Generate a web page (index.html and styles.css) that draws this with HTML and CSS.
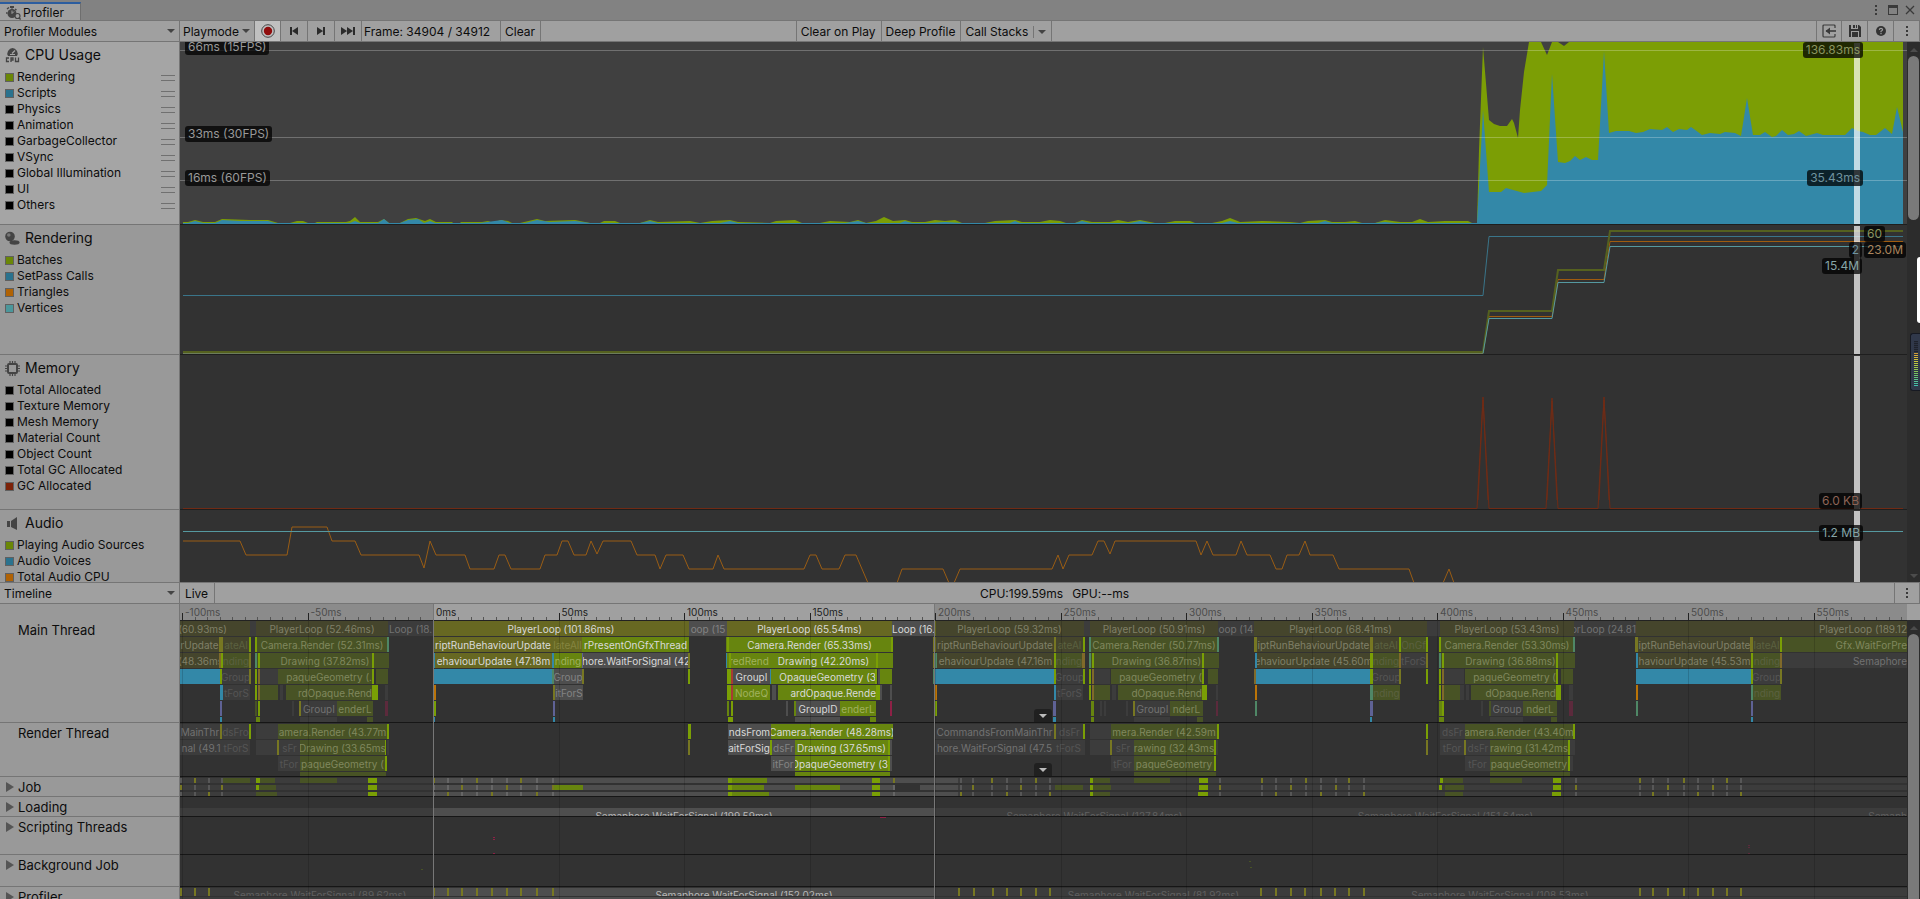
FILE: index.html
```
<!DOCTYPE html>
<html lang="en">
<head>
    <meta charset="UTF-8">
    <meta name="viewport" content="width=device-width, initial-scale=1.0">
    <title>Profiler</title>
    <link rel="stylesheet" href="styles.css">
</head>
<body>

<!-- Window tab bar -->
<header class="tab-bar">
    <div class="tab">
        <svg class="tab-icon" viewBox="0 0 15 14" width="15" height="14">
            <circle cx="6" cy="7.500" r="4.500" fill="#444"/>
            <rect x="4" y="0" width="4" height="2" fill="#444"/>
            <rect x="5.500" y="1" width="1" height="3" fill="#444"/>
            <path d="M1 3l2-1.500M0 7h1.500M9 3l1.500 1" stroke="#444" stroke-width="1.500"/>
            <path d="M6 7.500V4.500M6 7.500l2-2" stroke="#a0a0a0" stroke-width="1"/>
            <circle cx="11.500" cy="10" r="2.500" fill="#a0a0a0" stroke="#444" stroke-width="1.200"/>
            <path d="M13 11.500l1.500 2" stroke="#444" stroke-width="1.300"/>
        </svg>
        <span>Profiler</span>
    </div>
    <div class="window-buttons">
        <button aria-label="Menu"><svg viewBox="0 0 12 12" width="12" height="12"><path d="M5 1h2v2H5zM5 5h2v2H5zM5 9h2v2H5z" fill="#3a3a3a"/></svg></button>
        <button aria-label="Maximize"><svg viewBox="0 0 12 12" width="12" height="12"><rect x="1.500" y="1.500" width="9" height="9" fill="none" stroke="#3a3a3a"/><rect x="1" y="1" width="10" height="3" fill="#3a3a3a"/></svg></button>
        <button aria-label="Close"><svg viewBox="0 0 12 12" width="12" height="12"><path d="M2 2l8 8M10 2l-8 8" stroke="#3a3a3a" stroke-width="1.300"/></svg></button>
    </div>
</header>

<!-- Main toolbar -->
<div class="toolbar">
    <div class="drop drop-side">
        <select aria-label="Profiler Modules"><option>Profiler Modules</option></select>
    </div>
    <div class="drop drop-mode">
        <select aria-label="Playmode"><option>Playmode</option></select>
    </div>
    <button class="icon-button record" aria-label="Record">
        <svg viewBox="0 0 14 14" width="14" height="14"><circle cx="7" cy="7" r="6.300" fill="none" stroke="#444"/><circle cx="7" cy="7" r="4.200" fill="#900c0c"/></svg>
    </button>
    <button class="icon-button" aria-label="Previous frame">
        <svg viewBox="0 0 14 10" width="14" height="10"><path d="M3 1h2v8H3zM11 1v8L5 5z" fill="#2b2b2b"/></svg>
    </button>
    <button class="icon-button" aria-label="Next frame">
        <svg viewBox="0 0 14 10" width="14" height="10"><path d="M9 1h2v8H9zM3 1v8l6-4z" fill="#2b2b2b"/></svg>
    </button>
    <button class="icon-button" aria-label="Current frame">
        <svg viewBox="0 0 14 10" width="14" height="10"><path d="M12 1h2v8h-2zM0 1v8l6-4zM6 1v8l6-4z" fill="#2b2b2b"/></svg>
    </button>
    <span class="frame-label">Frame: 34904 / 34912</span>
    <button class="text-button">Clear</button>
    <div class="space"></div>
    <button class="text-button first">Clear on Play</button>
    <button class="text-button">Deep Profile</button>
    <button class="text-button stacks">Call Stacks <i class="caret"></i></button>
    <div class="space wide"></div>
    <div class="tools">
        <button class="icon-button first" aria-label="Load">
            <svg viewBox="0 0 14 14" width="14" height="14"><path d="M13 4V2q0-1-1-1H2Q1 1 1 2v10q0 1 1 1h10q1 0 1-1v-2" fill="none" stroke="#3a3a3a" stroke-width="1.200"/><path d="M4 7h10" stroke="#3a3a3a" stroke-width="1.600"/><path d="M3.500 7L8 3.500v7z" fill="#3a3a3a"/></svg>
        </button>
        <button class="icon-button" aria-label="Save">
            <svg viewBox="0 0 14 14" width="14" height="14"><path d="M1 1h2v4h7V1h1l2 2v10h-2V7H3v6H1z" fill="#333"/><path d="M5 1h2v3H5zM8 1h1v3H8zM4 8h6v5H4z" fill="#333"/></svg>
        </button>
        <button class="icon-button" aria-label="Help">
            <svg viewBox="0 0 14 14" width="14" height="14"><circle cx="7" cy="7" r="5" fill="#333"/><path d="M5.300 5.800Q5.500 4.300 7 4.300T8.600 5.700Q8.500 6.500 7 7.300V8.300" fill="none" stroke="#a0a0a0" stroke-width="1.200"/><rect x="6.400" y="9" width="1.200" height="1.200" fill="#a0a0a0"/></svg>
        </button>
        <button class="icon-button" aria-label="More">
            <svg viewBox="0 0 12 12" width="12" height="12"><path d="M5 1h2v2H5zM5 5h2v2H5zM5 9h2v2H5z" fill="#3a3a3a"/></svg>
        </button>
    </div>
</div>

<!-- Profiler modules -->
<div class="modules">
    <div class="module-list">
        <section class="module cpu selected">
            <div class="legend">
                <h2>
                    <svg viewBox="0 0 15 15" width="15" height="15"><path d="M3 8Q1.500 6 3 3Q5 0 7.500 0T12 3q1.500 3 0 5z" fill="#444"/><path d="M7 5.500L10 2.500" stroke="#a5a5a5" stroke-width="1.200"/><path d="M5 6.500h5" stroke="#a5a5a5"/><path d="M4 10H1.500v3.500H4M6 14v-4h2v2H6M10.500 9.500v4h3v-4" fill="none" stroke="#444" stroke-width="1.300"/></svg>
                    CPU Usage
                </h2>
                <ul class="draggable">
                    <li class="c-green">Rendering</li>
                    <li class="c-blue">Scripts</li>
                    <li>Physics</li>
                    <li>Animation</li>
                    <li>GarbageCollector</li>
                    <li>VSync</li>
                    <li>Global Illumination</li>
                    <li>UI</li>
                    <li>Others</li>
                </ul>
            </div>
            <div class="chart">
                <svg viewBox="180 42 1727 182" preserveAspectRatio="none">
                    <path fill="#7c9e05" d="M183 224V222H188L195 220L203 222H215L222 219L250 220H268L278 223H290L297 221H303L308 223H315L317 222H346L350 221L355 217L360 222H378L384 219L389 223H400L408 219L416 218L425 221L430 219L436 222H452L453 223H460L461 222H482L488 221L494 223L500 220L508 221L512 223H520L537 219L545 221L575 220L590 223H600L604 221H615L620 223H640L650 220L658 222L690 221L700 223L712 221L730 220L738 222L770 223L776 221L795 220L802 223H820L830 221L850 222L858 220L866 223L876 221L884 217L893 221L905 220L912 222H925L935 220L945 221L955 220L962 223H985L995 221L1015 220L1022 222H1040L1050 220L1060 221L1066 223H1075L1082 220L1092 222H1110L1118 220L1128 222L1140 220L1155 223H1165L1175 221H1190L1195 223H1212L1222 221L1230 218L1240 222L1262 221L1290 222L1300 223L1308 221L1325 220L1332 222H1345L1355 221L1362 223H1375L1385 220L1400 222H1412L1420 219L1428 222L1445 221H1468L1472 223H1477L1479 150L1483 47L1489 120L1494 124L1500 126H1507L1512 119L1514 123L1518 138L1520 110L1524 72L1529 42H1541L1547 55L1552 42H1558L1564 46L1569 42H1903V224Z"/>
                    <path fill="#3388a8" d="M183 224V223H188L195 221L203 223H215L222 220L240 221H268L275 223H350L355 221L360 223H378L384 219L389 223H400L408 220L418 219L424 223L430 221L435 223H480L502 220L510 223H525L537 220L550 222L575 221L590 223H640L650 221L658 223H720L730 221L738 223H845L858 221L866 223H900L905 221L912 223H930L945 222L962 223H1010L1015 221L1020 223H1075L1082 221L1090 223H1130L1140 221L1150 223H1222L1230 221L1238 223H1318L1325 221L1332 223H1375L1385 222L1395 223H1477L1483 110L1489 192H1501L1506 188L1524 193L1541 191L1547 185L1552 74L1558 162L1565 163L1570 161L1575 156L1580 160L1586 157L1592 160H1598L1604 51L1609 133L1616 131H1629L1636 133L1643 132L1650 129L1662 130L1667 127L1673 132L1679 129L1687 130L1691 127L1698 132L1702 135L1710 133L1720 134L1725 132L1735 133L1741 136L1747 98L1753 135H1760L1765 132L1772 137L1776 136L1782 130L1788 135L1794 134L1799 131L1806 136L1817 133L1823 135H1845L1852 128L1858 131L1863 132L1870 135H1876L1885 128L1892 134L1897 107L1903 132V224Z"/>
                    <path class="grid" d="M180 50.500H1907M180 137.500H1907M180 180.500H1907"/>
                </svg>
                <i class="cursor"></i>
                <span class="badge fps-15">66ms (15FPS)</span>
                <span class="badge fps-30">33ms (30FPS)</span>
                <span class="badge fps-60">16ms (60FPS)</span>
                <span class="badge v-cpu">136.83ms</span>
                <span class="badge v-script">35.43ms</span>
            </div>
        </section>

        <section class="module rendering">
            <div class="legend">
                <h2>
                    <svg viewBox="0 0 15 15" width="15" height="15"><circle cx="5" cy="5.500" r="4.800" fill="#444"/><circle cx="3.800" cy="4" r="1.800" fill="#777"/><ellipse cx="9.500" cy="11.500" rx="5" ry="2.200" fill="#444"/></svg>
                    Rendering
                </h2>
                <ul>
                    <li class="c-green">Batches</li>
                    <li class="c-blue">SetPass Calls</li>
                    <li class="c-orange">Triangles</li>
                    <li class="c-teal">Vertices</li>
                </ul>
            </div>
            <div class="chart">
                <svg viewBox="180 225 1727 129" preserveAspectRatio="none">
                    <path stroke="#3a758a" d="M183 295.500H1483L1489 236.500H1903"/>
                    <path stroke="#a05c0f" d="M183 352H1483L1489 316.500H1552L1558 279.500H1604L1610 241.500H1903"/>
                    <path stroke="#55611f" stroke-width="2" d="M183 352H1483L1489 311H1552L1558 270H1604L1610 231H1903"/>
                    <path stroke="#5599a0" d="M1483 353.500L1489 318.500H1552L1558 282.500H1604L1610 246.500H1903"/>
                    <path stroke="#6c7c5c" d="M183 353.500H1483"/>
                </svg>
                <i class="cursor"></i>
                <span class="badge v-batches">60</span>
                <span class="badge v-setpass">2</span>
                <span class="badge v-tris">23.0M</span>
                <span class="badge v-verts">15.4M</span>
            </div>
        </section>

        <section class="module memory">
            <div class="legend">
                <h2>
                    <svg viewBox="0 0 15 15" width="15" height="15"><rect x="3" y="3" width="9" height="9" rx="1" fill="none" stroke="#444" stroke-width="2"/><path d="M5 0v2M7.500 0v2M10 0v2M5 13v2M7.500 13v2M10 13v2M0 5h2M0 7.500h2M0 10h2M13 5h2M13 7.500h2M13 10h2" stroke="#444" stroke-width="1.200"/></svg>
                    Memory
                </h2>
                <ul>
                    <li>Total Allocated</li>
                    <li>Texture Memory</li>
                    <li>Mesh Memory</li>
                    <li>Material Count</li>
                    <li>Object Count</li>
                    <li>Total GC Allocated</li>
                    <li class="c-red">GC Allocated</li>
                </ul>
            </div>
            <div class="chart">
                <svg viewBox="180 355 1727 154" preserveAspectRatio="none">
                    <path stroke="#702b15" d="M183 508.500H1477L1483 397L1489 508.500H1546L1552 398L1558 508.500H1598L1604 397L1610 508.500H1903"/>
                    <path stroke="#702b15" d="M1478 500L1483 400L1488 500M1547 500L1552 401L1557 500M1599 500L1604 400L1609 500"/>
                </svg>
                <i class="cursor"></i>
                <span class="badge v-gc">6.0 KB</span>
            </div>
        </section>

        <section class="module audio">
            <div class="legend">
                <h2>
                    <svg viewBox="0 0 15 15" width="15" height="15"><path d="M2 5h3v6H2zM6 5l6-4v13l-6-3z" fill="#444"/></svg>
                    Audio
                </h2>
                <ul>
                    <li class="c-green">Playing Audio Sources</li>
                    <li class="c-blue">Audio Voices</li>
                    <li class="c-orange">Total Audio CPU</li>
                </ul>
            </div>
            <div class="chart">
                <svg viewBox="180 510 1727 72" preserveAspectRatio="none">
                    <path stroke="#9a5d14" d="M183 541H240L246 555H287L292 527H327L332 541H355L361 555H419L424 568L430 541L436 555H465L470 569H494L499 555H505L511 569H540L545 555H557L562 541H568L574 555H586L591 541L597 554L603 541H631L637 555H655L660 569L666 555H683L689 569H713L718 555L724 569H804L810 555H816L822 569H839L845 555H856L868 583H897L902 569H943L949 583H954L960 569H1052L1058 555L1063 569L1069 555H1092L1098 541H1104L1110 554L1115 541H1196L1201 555L1207 541L1213 555H1236L1241 541L1247 555H1270L1276 569H1282L1287 555H1299L1305 541L1310 555H1333L1339 569H1409L1414 583H1443L1449 569L1454 583"/>
                    <path stroke="#5599a0" d="M183 531.500H1903"/>
                </svg>
                <i class="cursor"></i>
                <span class="badge v-audio">1.2 MB</span>
            </div>
        </section>
    </div>
    <div class="scrollbar">
        <i class="arrow up"></i>
        <i class="thumb"></i>
        <i class="arrow down"></i>
    </div>
</div>

<!-- Timeline toolbar -->
<div class="toolbar">
    <div class="drop drop-side">
        <select aria-label="View"><option>Timeline</option></select>
    </div>
    <button class="text-button live">Live</button>
    <div class="totals"><span>CPU:199.59ms</span><span>GPU:--ms</span></div>
    <div class="tools">
        <button class="icon-button first" aria-label="Timeline options">
            <svg viewBox="0 0 12 12" width="12" height="12"><path d="M5 1h2v2H5zM5 5h2v2H5zM5 9h2v2H5z" fill="#3a3a3a"/></svg>
        </button>
    </div>
</div>

<!-- Timeline -->
<div class="timeline">
    <div class="threads">
        <div class="thread main">Main Thread</div>
        <div class="thread render">Render Thread</div>
        <div class="thread job foldable">Job</div>
        <div class="thread loading foldable">Loading</div>
        <div class="thread scripting foldable">Scripting Threads</div>
        <div class="thread background foldable">Background Job</div>
        <div class="thread profiler foldable">Profiler</div>
    </div>
    <div class="tracks">
        <div class="ruler" id="ruler"></div>
        <div class="track main" id="mainTrack"><i class="more"></i></div>
        <div class="track render" id="renderTrack"><i class="more"></i></div>
        <div class="track job" id="jobTrack"></div>
        <div class="track loading" id="loadingTrack"></div>
        <div class="track scripting" id="scriptingTrack"></div>
        <div class="track background" id="backgroundTrack"></div>
        <div class="track profiler" id="profilerTrack"></div>
        <div class="guides" id="guides"></div>
    </div>
    <div class="scrollbar tall">
        <i class="ruler-end"></i>
        <i class="arrow up"></i>
        <i class="thumb"></i>
    </div>
</div>

<!-- Widgets docked over the right edge -->
<i class="edge-handle"></i>
<div class="meter"></div>

<script src="script.js"></script>
</body>
</html>
```

FILE: styles.css
```
/* General Styling */
* {
    box-sizing: border-box;
}
body {
    position: relative;
    display: flex;
    flex-direction: column;
    height: 100vh;
    margin: 0;
    overflow: hidden;
    font-family: Inter, 'Liberation Sans', sans-serif;
    font-size: 12px;
    line-height: 16px;
    color: #0c0c0c;
    background-color: #323232;
}
button, select {
    font: inherit;
    color: inherit;
    background: none;
    border: none;
    border-radius: 0;
    padding: 0;
    margin: 0;
}
h2, ul {
    margin: 0;
    padding: 0;
    font-weight: normal;
    list-style: none;
}
svg {
    display: block;
    flex: none;
}

/* Tab bar */
.tab-bar {
    display: flex;
    justify-content: space-between;
    flex: none;
    height: 20px;
    background-color: #828282;
}
.tab {
    display: flex;
    align-items: center;
    gap: 2px;
    width: 81px;
    height: 19px;
    margin-top: 2px;
    padding-left: 6px;
    border-top: 2px solid #2c5d9f;
    border-right: 1px solid #6e6e6e;
    background-color: #a0a0a0;
}
.window-buttons {
    display: flex;
    align-items: center;
    gap: 5px;
    padding-right: 4px;
}

/* Toolbars */
.toolbar {
    display: flex;
    flex: none;
    height: 22px;
    border-top: 1px solid #757575;
    border-bottom: 1px solid #757575;
    background-color: #a0a0a0;
}
.drop {
    position: relative;
    border-right: 1px solid #757575;
}
.drop select {
    appearance: none;
    width: 100%;
    height: 20px;
    padding-top: 2px;
    padding-left: 4px;
}
.drop::after {
    content: "";
    position: absolute;
    right: 4px;
    top: 8px;
    border: 4px solid transparent;
    border-top-color: #444;
    border-bottom: none;
    pointer-events: none;
}
.drop-side {
    width: 180px;
}
.drop-mode {
    width: 75px;
}
.drop-mode select {
    padding-left: 3px;
}
.icon-button {
    display: flex;
    align-items: center;
    justify-content: center;
    width: 27px;
    border-right: 1px solid #757575;
}
.icon-button.record {
    width: 26px;
    background-color: #c0c0c0;
}
.tools {
    display: flex;
}
.tools .icon-button {
    width: 26px;
}
.text-button, .frame-label {
    padding: 2px 5px 0 4px;
    white-space: nowrap;
    border-right: 1px solid #757575;
}
.frame-label {
    width: 139px;
    padding: 3px 2px 0;
}
.first {
    border-left: 1px solid #757575;
}
.space {
    flex: 1;
}
.space.wide {
    flex: 3;
}
.stacks {
    display: flex;
    align-items: center;
    gap: 5px;
}
.caret {
    display: flex;
    align-items: center;
    height: 12px;
    padding-left: 4px;
    border-left: 1px solid #757575;
}
.caret::after {
    content: "";
    border: 4px solid transparent;
    border-top-color: #444;
    border-bottom: none;
}
.live {
    width: 35px;
}
.totals {
    flex: 1;
    display: flex;
    justify-content: center;
    gap: 9px;
    padding-top: 3px;
}

/* Modules */
.modules {
    display: flex;
    flex: 0 0 540px;
    overflow: hidden;
}
.module-list {
    flex: 1;
    height: 540px;
    overflow: hidden;
}
.module {
    display: flex;
}
.module.cpu {
    height: 183px;
}
.module.rendering {
    height: 130px;
}
.module.memory {
    height: 155px;
}
.module.audio {
    height: 73px;
}
.legend {
    flex: 0 0 180px;
    padding-top: 3px;
    border-right: 1px solid #757575;
    border-bottom: 1px solid #757575;
    background-color: #999;
    overflow: hidden;
}
.selected .legend {
    background-color: #a5a5a5;
}
.legend h2 {
    display: flex;
    align-items: center;
    gap: 5px;
    height: 20px;
    margin-bottom: 4px;
    padding-left: 5px;
    font-size: 14px;
}
.legend li {
    position: relative;
    height: 16px;
    padding-left: 17px;
}
.legend li::before {
    content: "";
    position: absolute;
    left: 5px;
    top: 4px;
    width: 7px;
    height: 7px;
    border: 1px solid #606060;
    background-color: #000;
}
.legend .c-green::before {
    background-color: #6a8706;
}
.legend .c-blue::before {
    background-color: #2a728e;
}
.legend .c-orange::before {
    background-color: #b06204;
}
.legend .c-teal::before {
    background-color: #4b979b;
}
.legend .c-red::before {
    background-color: #7c2208;
}
.draggable li::after {
    content: "";
    position: absolute;
    right: 4px;
    top: 6px;
    width: 14px;
    height: 4px;
    border-top: 1px solid #707070;
    border-bottom: 1px solid #707070;
}
.chart {
    position: relative;
    flex: 1;
    border-bottom: 1px solid #1e1e1e;
    background-color: #323232;
    overflow: hidden;
}
.selected .chart {
    background-color: #404040;
}
.chart svg {
    width: 100%;
    height: 100%;
}
.chart path[stroke], .chart .grid {
    fill: none;
    vector-effect: non-scaling-stroke;
}
.chart .grid {
    stroke: rgba(255, 255, 255, 0.25);
}
.cursor {
    position: absolute;
    right: 47px;
    top: 1px;
    bottom: 0;
    width: 6px;
    background-color: rgba(255, 255, 255, 0.7);
}
.badge {
    position: absolute;
    height: 16px;
    padding: 0 3px;
    border-radius: 3px;
    background-color: rgba(0, 0, 0, 0.75);
    color: #999;
    white-space: nowrap;
}
.fps-15, .fps-30, .fps-60 {
    left: 5px;
}
.fps-15 {
    top: -3px;
}
.fps-30 {
    top: 84px;
}
.fps-60 {
    top: 128px;
}
.v-cpu, .v-script, .v-audio {
    right: 44px;
}
.v-cpu {
    top: 0;
    color: #8a9560;
}
.v-script {
    top: 128px;
    color: #6f929e;
}
.v-batches {
    right: 22px;
    top: 1px;
    color: #8a9560;
}
.v-setpass, .v-verts, .v-gc {
    right: 45px;
}
.v-setpass {
    top: 17px;
    color: #6f929e;
}
.v-tris {
    right: 1px;
    top: 17px;
    color: #ab845c;
}
.v-verts {
    top: 33px;
    color: #86a5a7;
}
.v-gc {
    bottom: 0;
    color: #8e6457;
}
.v-audio {
    top: 15px;
    color: #86a5a7;
}

/* Scrollbars */
.scrollbar {
    display: flex;
    flex-direction: column;
    align-items: center;
    flex: 0 0 13px;
    background-color: #2c2c2c;
}
.scrollbar .arrow {
    border: 4px solid transparent;
}
.scrollbar .up {
    margin: 2px 0 4px;
    border-bottom-color: #4c4c4c;
}
.scrollbar .down {
    margin-top: auto;
    border-top-color: #4c4c4c;
}
.scrollbar .thumb {
    width: 11px;
    height: 164px;
    border-radius: 6px;
    background-color: #7a7a7a;
}
.scrollbar.tall .thumb {
    flex: 1;
    border-radius: 6px 6px 0 0;
}
.ruler-end {
    width: 100%;
    height: 16px;
    background-color: #a0a0a0;
}

/* Timeline */
.timeline {
    display: flex;
    flex: 1;
    min-height: 0;
    overflow: hidden;
}
.threads {
    flex: 0 0 180px;
    border-right: 1px solid #757575;
    background-color: #999;
}
.thread {
    position: relative;
    padding-left: 18px;
    font-size: 13px;
    line-height: 20px;
    border-bottom: 1px solid #757575;
}
.thread.main {
    height: 119px;
    padding-top: 16px;
}
.foldable::before {
    content: "";
    position: absolute;
    left: 6px;
    top: 5px;
    border: 5px solid transparent;
    border-left: 8px solid #555;
    border-right: none;
}
.tracks {
    position: relative;
    flex: 1;
    background-color: #323232;
    overflow: hidden;
    font-size: 10px;
    line-height: 17px;
}
.ruler {
    position: relative;
    height: 16px;
    background-color: #8b8b8b;
    line-height: 17px;
    color: #4c4c4c;
}
.ruler .current {
    position: absolute;
    top: 0;
    bottom: 0;
    background-color: #a0a0a0;
}
.ruler span {
    position: absolute;
    padding-left: 3px;
}
.ruler span.lit {
    color: #1c1c1c;
}
.ruler .tick {
    position: absolute;
    bottom: 0;
    width: 1px;
    height: 3px;
    background-color: #555;
}
.ruler .tick.major {
    height: 7px;
    background-color: #222;
}
.track {
    position: relative;
    padding-top: 1px;
    border-bottom: 1px solid #161616;
    overflow: hidden;
}
.track.main {
    height: 103px;
    border-top: 1px solid #222;
    padding-top: 0;
}
.render {
    height: 54px;
}
.job, .loading {
    height: 20px;
}
.scripting {
    height: 38px;
}
.background {
    height: 32px;
}
.profiler {
    height: 40px;
}
.lane {
    position: relative;
    height: 15px;
    margin-bottom: 1px;
}
.track.job .lane {
    height: 5px;
}
.track.job .lane + .lane {
    margin-top: 2px;
}
.track.loading {
    padding-top: 11px;
}
.track.loading .lane, .track.profiler .lane {
    height: 8px;
    overflow: hidden;
}
.track.scripting, .track.background {
    padding-top: 0;
}
.track.scripting .lane, .track.background .lane {
    height: 1px;
}
.bar {
    position: absolute;
    top: 0;
    bottom: 0;
    display: flex;
    justify-content: center;
    overflow: hidden;
    white-space: nowrap;
    color: #dadada;
}
.bar.right {
    justify-content: flex-end;
}
.track.loading .bar {
    line-height: 16px;
}
.track.profiler .bar {
    line-height: 14px;
}
.olive {
    background-color: #676822;
}
.green {
    background-color: #67850f;
}
.grey {
    background-color: #4e4e4e;
}
.d-olive {
    background-color: #45452c;
    color: #808068;
}
.d-green {
    background-color: #485325;
    color: #80885e;
}
.d-grey {
    background-color: #3c3c3c;
    color: #727272;
}
.blue {
    background-color: #3388a8;
}
.lime {
    background-color: #7a9f05;
}
.yellow {
    background-color: #777722;
}
.orange {
    background-color: #bb7408;
}
.teal {
    background-color: #4f8766;
}
.brown {
    background-color: #806a2a;
}
.red {
    background-color: #a83b33;
}
.purple {
    background-color: #5f6295;
}
.crimson {
    background-color: #8e2146;
}
.d-crimson {
    background-color: #5c2a3c;
}
.light {
    background-color: #666;
}
.d-light {
    background-color: #575757;
}
.dark {
    background-color: #323232;
}
.clear {
    color: #606060;
}
.bar.clear.bright {
    color: #b8b8b8;
}
.grey.faint {
    color: #838383;
}
.green.faint {
    color: #a0b15e;
}
.olive.faint {
    color: #858540;
}
.d-grey.faint {
    color: #555;
}
.d-green.faint, .d-olive.faint {
    color: #5b6140;
}
.guides i {
    position: absolute;
    top: 17px;
    bottom: 0;
    width: 1px;
    background-color: rgba(0, 0, 0, 0.15);
}
.guides i.edge {
    top: 0;
    background-color: #777;
}
.more {
    position: absolute;
    z-index: 1;
    left: 49.45%;
    bottom: 0;
    display: flex;
    align-items: center;
    justify-content: center;
    width: 18px;
    height: 13px;
    border-radius: 3px 3px 0 0;
    background-color: #202020;
}
.more::after {
    content: "";
    border: 4px solid transparent;
    border-top-color: #bbb;
    border-bottom: none;
}

/* Edge widgets */
.edge-handle {
    position: absolute;
    right: 0;
    top: 257px;
    width: 3px;
    height: 66px;
    border-radius: 3px 0 0 3px;
    background-color: #fff;
}
.meter {
    position: absolute;
    right: 0;
    top: 333px;
    width: 10px;
    height: 58px;
    padding: 7px 2px 5px 3px;
    border: 1px solid #161922;
    border-right: none;
    border-radius: 3px 0 0 3px;
    background-color: #30384a;
}
.meter::before {
    content: "";
    display: block;
    height: 45px;
    background: repeating-linear-gradient(transparent 0 1px, #2c3242 1px 2px), linear-gradient(#1e222c 0 24%, #dba63a 28%, #c8c83c 46%, #7ec45a 70%, #3fc0b4 100%);
}
```

FILE: script.js
```
// The tracks are drawn in units of a 1920 wide window
const TRACK_START = 180;
const TRACK_WIDTH = 1727;
const ZERO = 433;
const UNITS_PER_MS = 2.51;
const FRAME_MS = 199.59;

const left = x => ((x - TRACK_START) / TRACK_WIDTH * 100) + '%';
const width = w => (w / TRACK_WIDTH * 100) + '%';

// Every sample is [start, end, colour classes, text]
const mainLanes = [
    [
        [180, 227, 'd-olive right', '(60.93ms)'], [227, 250, 'd-olive'], [250, 256, 'd-grey'], [256, 388, 'd-olive', 'PlayerLoop (52.46ms)'],
        [388, 433, 'd-grey', 'Loop (18.'], [433, 689, 'olive', 'PlayerLoop (101.86ms)'], [689, 727, 'grey faint', 'oop (15'],
        [727, 892, 'olive', 'PlayerLoop (65.54ms)'], [892, 935, 'grey', 'Loop (16.'], [935, 1084, 'd-olive', 'PlayerLoop (59.32ms)'],
        [1084, 1090, 'd-grey'], [1090, 1218, 'd-olive', 'PlayerLoop (50.91ms)'], [1218, 1254, 'd-grey', 'oop (14'],
        [1254, 1427, 'd-olive', 'PlayerLoop (68.41ms)'], [1427, 1440, 'd-grey'], [1440, 1574, 'd-olive', 'PlayerLoop (53.43ms)'],
        [1574, 1636, 'd-grey right', 'orLoop (24.81'], [1636, 1907, 'd-olive right', 'PlayerLoop (189.12'], [934, 936, 'yellow']
    ],
    [
        [180, 219, 'd-olive', 'rUpdate'], [219, 223, 'yellow'], [223, 249, 'd-olive faint', 'ateAl'], [249, 251, 'lime'],
        [255, 257, 'lime'], [257, 387, 'd-green', 'Camera.Render (52.31ms)'], [387, 389, 'teal'],
        [433, 553, 'olive', 'riptRunBehaviourUpdate'], [553, 582, 'olive faint', 'lateAll'], [582, 689, 'green', 'rPresentOnGfxThread'],
        [726, 893, 'green', 'Camera.Render (65.33ms)'], [727, 729, 'lime'], [891, 893, 'lime'],
        [936, 1054, 'd-olive', 'riptRunBehaviourUpdate'], [933, 936, 'yellow'], [1054, 1056, 'yellow'], [1056, 1083, 'd-olive faint', 'ateAl'],
        [1083, 1085, 'lime'], [1089, 1091, 'teal'], [1091, 1217, 'd-green', 'Camera.Render (50.77ms)'], [1217, 1219, 'teal'],
        [1254, 1257, 'yellow'], [1257, 1370, 'd-olive', 'iptRunBehaviourUpdate'], [1370, 1373, 'yellow'], [1373, 1399, 'd-olive faint', 'ateAl'],
        [1399, 1401, 'lime'], [1401, 1426, 'd-green faint', 'OnGf'], [1426, 1428, 'lime'],
        [1439, 1441, 'lime'], [1441, 1573, 'd-green', 'Camera.Render (53.30ms)'], [1573, 1575, 'teal'],
        [1635, 1638, 'yellow'], [1638, 1751, 'd-olive', 'iptRunBehaviourUpdate'], [1750, 1753, 'yellow'], [1753, 1780, 'd-olive faint', 'lateAl'],
        [1780, 1782, 'lime'], [1782, 1907, 'd-green right', 'Gfx.WaitForPre']
    ],
    [
        [180, 221, 'd-olive', '(48.36ms'], [219, 221, 'brown'], [221, 223, 'lime'], [223, 249, 'd-green faint', 'nding'], [249, 251, 'yellow'],
        [255, 257, 'teal'], [257, 278, 'd-green'], [258, 260, 'lime'], [278, 372, 'd-green', 'Drawing (37.82ms)'], [372, 374, 'lime'], [374, 389, 'd-green'],
        [435, 552, 'olive', 'ehaviourUpdate (47.18m'], [433, 435, 'blue'], [552, 554, 'blue'], [554, 582, 'green faint', 'nding'],
        [582, 583, 'purple'], [583, 689, 'grey', 'hore.WaitForSignal (42'], [688, 690, 'yellow'],
        [726, 727, 'blue'], [727, 771, 'green faint', 'redRend'], [729, 731, 'lime'], [771, 876, 'green', 'Drawing (42.20ms)'], [876, 878, 'lime'], [878, 893, 'green'],
        [933, 935, 'yellow'], [935, 937, 'teal'], [937, 1054, 'd-olive', 'ehaviourUpdate (47.16m'], [1054, 1056, 'lime'], [1056, 1082, 'd-green faint', 'nding'], [1082, 1085, 'brown'],
        [1089, 1091, 'teal'], [1091, 1111, 'd-green'], [1092, 1094, 'lime'], [1111, 1202, 'd-green', 'Drawing (36.87ms)'], [1202, 1204, 'lime'], [1204, 1219, 'd-green'],
        [1255, 1257, 'blue'], [1257, 1370, 'd-olive', 'ehaviourUpdate (45.60m'], [1370, 1373, 'lime'], [1373, 1399, 'd-green faint', 'nding'], [1399, 1401, 'brown'],
        [1401, 1426, 'd-grey faint', 'tForS'], [1426, 1428, 'yellow'],
        [1439, 1441, 'teal'], [1441, 1465, 'd-green'], [1442, 1444, 'lime'], [1465, 1556, 'd-green', 'Drawing (36.88ms)'], [1556, 1558, 'lime'], [1558, 1575, 'd-green'],
        [1636, 1638, 'blue'], [1638, 1751, 'd-olive', 'haviourUpdate (45.53m'], [1751, 1753, 'lime'], [1753, 1781, 'd-green faint', 'nding'], [1780, 1782, 'brown'],
        [1782, 1907, 'd-grey right', 'Semaphore']
    ],
    [
        [180, 220, 'blue'], [220, 222, 'lime'], [222, 249, 'd-grey faint', 'Group'], [249, 251, 'yellow'],
        [255, 257, 'lime'], [258, 260, 'brown'], [260, 278, 'd-grey'], [278, 372, 'd-green right', 'paqueGeometry (.'], [372, 374, 'lime'], [376, 388, 'd-green'],
        [433, 552, 'blue'], [552, 554, 'teal'], [554, 582, 'grey faint', 'Group'], [582, 584, 'yellow'], [688, 690, 'lime'],
        [727, 731, 'lime'], [731, 733, 'red'], [733, 770, 'grey', 'GroupI'], [770, 771, 'blue'], [771, 876, 'green right', 'OpaqueGeometry (3'],
        [875, 877, 'lime'], [878, 880, 'grey'], [880, 892, 'green'],
        [935, 1054, 'blue'], [933, 935, 'teal'], [1054, 1056, 'lime'], [1056, 1083, 'd-grey faint', 'Group'], [1083, 1085, 'lime'],
        [1089, 1091, 'lime'], [1092, 1094, 'brown'], [1094, 1110, 'd-grey'], [1111, 1202, 'd-green right', 'paqueGeometry ('], [1202, 1204, 'lime'], [1208, 1218, 'd-green'],
        [1254, 1256, 'brown'], [1256, 1370, 'blue'], [1370, 1373, 'lime'], [1373, 1399, 'd-grey faint', 'Group'], [1399, 1401, 'yellow'], [1426, 1428, 'lime'],
        [1439, 1441, 'lime'], [1442, 1444, 'brown'], [1444, 1464, 'd-grey'], [1465, 1556, 'd-green right', 'paqueGeometry ('], [1556, 1558, 'lime'], [1561, 1573, 'd-green'],
        [1636, 1751, 'blue'], [1751, 1753, 'lime'], [1753, 1780, 'd-grey faint', 'Group'], [1780, 1782, 'yellow']
    ],
    [
        [220, 223, 'blue'], [223, 250, 'd-grey faint', 'tForS'], [255, 257, 'lime'], [258, 260, 'brown'], [260, 278, 'd-green'],
        [280, 283, 'd-grey'], [286, 372, 'd-green right', 'rdOpaque.Rend'], [372, 378, 'lime'], [385, 388, 'd-grey'],
        [434, 436, 'orange'], [553, 555, 'yellow'], [555, 583, 'grey faint', 'itForS'],
        [727, 731, 'lime'], [731, 733, 'red'], [733, 770, 'green faint', 'NodeQ'], [772, 776, 'grey'], [778, 876, 'green right', 'ardOpaque.Rende'],
        [876, 880, 'lime'], [880, 882, 'grey'], [890, 892, 'grey'],
        [935, 937, 'orange'], [1054, 1056, 'blue'], [1056, 1083, 'd-grey faint', 'tForS'],
        [1089, 1091, 'lime'], [1092, 1094, 'brown'], [1094, 1110, 'd-green'], [1112, 1116, 'd-grey'], [1118, 1202, 'd-green right', 'dOpaque.Rend'],
        [1202, 1207, 'lime'], [1216, 1218, 'd-grey'],
        [1255, 1257, 'orange'], [1370, 1373, 'teal'], [1373, 1400, 'd-green faint', 'nding'],
        [1439, 1441, 'lime'], [1442, 1444, 'brown'], [1444, 1460, 'd-green'], [1460, 1464, 'd-grey'], [1466, 1469, 'd-grey'],
        [1471, 1556, 'd-green right', 'dOpaque.Rend'], [1556, 1561, 'lime'], [1569, 1573, 'd-grey'],
        [1636, 1638, 'orange'], [1751, 1753, 'teal'], [1753, 1781, 'd-green faint', 'nding']
    ],
    [
        [220, 222, 'purple'], [255, 257, 'd-green'], [258, 260, 'lime'], [292, 294, 'd-grey'], [299, 301, 'yellow'],
        [301, 337, 'd-grey', 'GroupI'], [337, 373, 'd-green', 'enderL'], [385, 388, 'd-crimson'],
        [433, 436, 'lime'], [553, 555, 'purple'], [727, 729, 'green'], [731, 733, 'lime'], [786, 788, 'grey'], [794, 796, 'green'],
        [796, 840, 'grey', 'GroupID'], [840, 876, 'green faint', 'enderL'], [890, 892, 'crimson'],
        [934, 937, 'lime'], [1053, 1056, 'purple'], [1091, 1094, 'green'], [1100, 1102, 'd-grey'], [1104, 1106, 'd-grey'], [1126, 1128, 'd-grey'],
        [1133, 1135, 'yellow'], [1135, 1170, 'd-grey', 'GroupI'], [1170, 1203, 'd-green', 'nderL'], [1216, 1218, 'd-crimson'],
        [1255, 1257, 'teal'], [1370, 1373, 'purple'], [1439, 1442, 'green'], [1442, 1444, 'lime'], [1481, 1483, 'd-grey'],
        [1489, 1491, 'd-green'], [1491, 1523, 'd-grey', 'Group'], [1523, 1557, 'd-green', 'nderL'], [1569, 1573, 'd-crimson'],
        [1636, 1638, 'teal'], [1751, 1753, 'purple']
    ],
    [
        [220, 222, 'blue'], [256, 260, 'green'], [300, 337, 'd-grey'], [367, 373, 'd-green'], [434, 435, 'blue'], [553, 555, 'blue'],
        [728, 733, 'lime'], [795, 840, 'grey'], [870, 876, 'green'], [1053, 1056, 'blue'], [1091, 1094, 'green'],
        [1134, 1170, 'd-grey'], [1197, 1203, 'd-green'], [1370, 1372, 'blue'], [1439, 1444, 'green'], [1490, 1523, 'd-grey'],
        [1551, 1557, 'd-green'], [1751, 1753, 'blue']
    ]
];

const renderLanes = [
    [
        [180, 220, 'd-grey', 'MainThr'], [220, 222, 'yellow'], [222, 249, 'd-grey faint', 'dsFro'], [249, 251, 'lime'], [256, 278, 'd-grey'],
        [278, 387, 'd-green', 'amera.Render (43.77m'], [387, 389, 'lime'], [688, 691, 'lime'],
        [728, 771, 'grey', 'ndsFrom'], [771, 893, 'green', 'Camera.Render (48.28ms)'],
        [935, 1054, 'd-grey', 'CommandsFromMainThr'], [1054, 1056, 'yellow'], [1056, 1083, 'd-grey faint', 'dsFr'], [1083, 1085, 'lime'], [1090, 1111, 'd-grey'],
        [1111, 1217, 'd-green', 'mera.Render (42.59m'], [1217, 1219, 'lime'], [1426, 1428, 'lime'],
        [1440, 1465, 'd-grey faint', 'dsFr'], [1465, 1573, 'd-green', 'amera.Render (43.40m'], [1573, 1575, 'lime']
    ],
    [
        [180, 222, 'd-grey', 'nal (49.1'], [222, 250, 'd-grey faint', 'tForS'], [256, 277, 'd-grey'], [277, 279, 'yellow'], [279, 300, 'd-grey faint', 'sFr'],
        [300, 385, 'd-green', 'Drawing (33.65ms'], [385, 386, 'lime'], [387, 389, 'd-grey'], [688, 690, 'yellow'],
        [728, 770, 'grey', 'aitForSig'], [770, 772, 'lime'], [772, 795, 'grey faint', 'dsFr'], [795, 888, 'green', 'Drawing (37.65ms)'], [888, 890, 'lime'], [890, 892, 'grey'],
        [935, 1054, 'd-grey', 'hore.WaitForSignal (47.5'], [1054, 1083, 'd-grey faint', 'tForS'], [1083, 1085, 'd-grey'], [1090, 1110, 'd-grey'], [1110, 1112, 'yellow'],
        [1112, 1134, 'd-grey faint', 'sFr'], [1134, 1214, 'd-green', 'rawing (32.43ms'], [1214, 1216, 'lime'], [1216, 1218, 'd-grey'],
        [1426, 1428, 'yellow'], [1440, 1464, 'd-grey faint', 'tFor'], [1464, 1466, 'yellow'], [1466, 1490, 'd-grey faint', 'dsFr'],
        [1490, 1568, 'd-green', 'rawing (31.42ms'], [1568, 1570, 'lime'], [1570, 1575, 'd-grey']
    ],
    [
        [278, 300, 'd-grey faint', 'tFor'], [300, 385, 'd-green', 'paqueGeometry ('], [385, 387, 'lime'],
        [771, 795, 'grey faint', 'itFor'], [795, 888, 'green right', 'OpaqueGeometry (3'], [888, 890, 'lime'], [890, 892, 'grey'],
        [1111, 1134, 'd-grey faint', 'tFor'], [1134, 1214, 'd-green', 'paqueGeometry'], [1214, 1216, 'lime'],
        [1465, 1490, 'd-grey faint', 'tFor'], [1490, 1568, 'd-green', 'paqueGeometry'], [1568, 1570, 'lime'], [1570, 1573, 'd-grey']
    ],
    [
        [300, 386, 'd-green'], [795, 890, 'green'], [1134, 1216, 'd-green'], [1490, 1570, 'd-green']
    ]
];

// Short job and profiler samples repeat at the same times on several lanes
const jobTimes = [
    180, 194, 208, 221, 433, 447, 461, 476, 491, 506, 520, 536, 552, 893, 960, 972, 991, 1006, 1020, 1035, 1049,
    1219, 1261, 1275, 1290, 1305, 1320, 1335, 1348, 1363, 1575, 1639, 1652, 1667, 1683, 1697, 1712, 1726, 1740
];
const profilerTimes = [
    180, 194, 208, 433, 447, 461, 476, 491, 506, 520, 536, 552, 958, 973, 992, 1006, 1020, 1035, 1049,
    1260, 1275, 1290, 1304, 1320, 1334, 1348, 1363, 1639, 1652, 1667, 1683, 1697, 1712, 1726, 1740
];
const idle = [[180, 433, 'd-grey'], [433, 935, 'grey'], [935, 1907, 'd-grey']];
const jobMarks = lane => jobTimes.map((x, i) => {
    const inFrame = x >= 433 && x < 935;
    return [x, x + 2, i % 3 === lane ? 'yellow' : inFrame ? 'light' : 'd-light'];
});

const jobLanes = [
    [
        ...idle, [935, 958, 'grey'], ...jobMarks(1), [223, 250, 'd-green'], [256, 260, 'lime'], [260, 275, 'd-green'], [300, 337, 'd-green'],
        [368, 377, 'lime'], [728, 767, 'green'], [728, 732, 'lime'], [872, 880, 'lime'], [1090, 1110, 'd-green'], [1090, 1093, 'lime'],
        [1134, 1170, 'd-green'], [1199, 1208, 'lime'], [1440, 1463, 'd-green'], [1440, 1443, 'lime'], [1490, 1522, 'd-green'], [1553, 1561, 'lime']
    ],
    [
        ...idle, [935, 958, 'grey'], ...jobMarks(0), [256, 259, 'lime'], [259, 276, 'd-green'], [368, 377, 'lime'], [554, 583, 'green'],
        [728, 764, 'green'], [728, 732, 'lime'], [795, 840, 'green'], [872, 880, 'lime'], [895, 920, 'dark'],
        [1055, 1083, 'd-green'], [1090, 1111, 'd-green'], [1090, 1093, 'lime'], [1199, 1208, 'lime'], [1439, 1442, 'lime'], [1445, 1464, 'd-green'], [1553, 1561, 'lime']
    ],
    [
        ...idle, [935, 958, 'grey'], ...jobMarks(2), [256, 277, 'd-green'], [368, 377, 'lime'], [728, 769, 'green'], [728, 732, 'lime'],
        [872, 880, 'lime'], [1090, 1110, 'd-green'], [1090, 1093, 'lime'], [1198, 1208, 'lime'], [1445, 1463, 'd-green'], [1552, 1561, 'lime']
    ]
];

const loadingLanes = [[
    ...idle,
    [574, 794, 'clear bright', 'Semaphore.WaitForSignal (199.59ms)'], [985, 1204, 'clear', 'Semaphore.WaitForSignal (127.84ms)'],
    [1336, 1555, 'clear', 'Semaphore.WaitForSignal (151.64ms)'], [1857, 1907, 'clear right', 'Semaph']
]];

const profilerLanes = [
    [
        ...idle, ...profilerTimes.map(x => [x, x + 2, 'yellow']),
        [223, 417, 'clear', 'Semaphore.WaitForSignal (89.62ms)'], [635, 853, 'clear bright', 'Semaphore.WaitForSignal (152.02ms)'],
        [1057, 1250, 'clear', 'Semaphore.WaitForSignal (81.92ms)'], [1390, 1610, 'clear', 'Semaphore.WaitForSignal (108.53ms)']
    ],
    idle
];

// Tiny samples, keyed by their row
function sparseLanes(rows, count) {
    return Array.from({ length: count }, (_, i) => rows[i] || []);
}

const scriptingLanes = sparseLanes({
    0: [[880, 886, 'crimson']],
    10: [[493, 495, 'crimson']],
    11: [[493, 495, 'crimson']],
    14: [[1748, 1750, 'd-crimson']],
    15: [[1748, 1750, 'd-crimson']],
    18: [[493, 495, 'crimson'], [1748, 1750, 'd-crimson']]
}, 19);

const backgroundLanes = sparseLanes({
    3: [[1249, 1251, 'd-green']],
    6: [[1250, 1252, 'd-green']],
    7: [[421, 423, 'd-green']]
}, 8);

function drawTrack(id, lanes) {
    const track = document.getElementById(id);
    lanes.forEach(samples => {
        const lane = document.createElement('div');
        lane.className = 'lane';
        lane.innerHTML = samples.map(([start, end, colour, text]) =>
            `<div class="bar ${colour}" style="left:${left(start)};width:${width(end - start)}">${text ? `<span>${text}</span>` : ''}</div>`
        ).join('');
        track.appendChild(lane);
    });
}

function drawRuler() {
    let html = `<div class="current" style="left:${left(ZERO)};width:${width(FRAME_MS * UNITS_PER_MS)}"></div>`;
    let guides = '';
    for (let ms = -100; ms <= 585; ms += 5) {
        const x = left(ZERO + ms * UNITS_PER_MS);
        const major = ms % 50 === 0;
        html += `<i class="tick ${major ? 'major' : ''}" style="left:${x}"></i>`;
        if (major) {
            html += `<span class="${ms >= 0 && ms < FRAME_MS ? 'lit' : ''}" style="left:${x}">${ms}ms</span>`;
            guides += `<i style="left:${x}"></i>`;
        }
    }
    [0, FRAME_MS].forEach(ms => {
        guides += `<i class="edge" style="left:${left(ZERO + ms * UNITS_PER_MS)}"></i>`;
    });
    document.getElementById('ruler').innerHTML = html;
    document.getElementById('guides').innerHTML = guides;
}

drawRuler();
drawTrack('mainTrack', mainLanes);
drawTrack('renderTrack', renderLanes);
drawTrack('jobTrack', jobLanes);
drawTrack('loadingTrack', loadingLanes);
drawTrack('scriptingTrack', scriptingLanes);
drawTrack('backgroundTrack', backgroundLanes);
drawTrack('profilerTrack', profilerLanes);
```
